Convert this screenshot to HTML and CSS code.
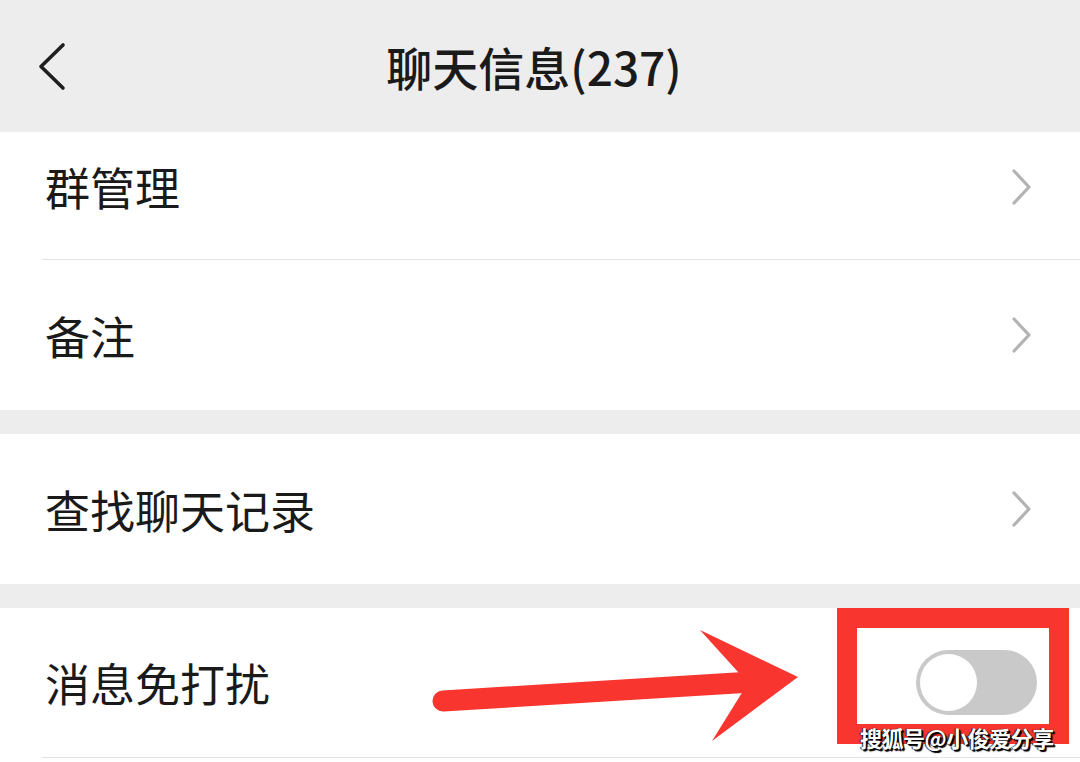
FILE: index.html
```html
<!DOCTYPE html>
<html lang="zh-CN">
<head>
    <meta charset="UTF-8">
    <meta name="viewport" content="width=device-width, initial-scale=1.0">
    <title>聊天信息</title>
    <link rel="stylesheet" href="styles.css">
</head>
<body>

    <div class="page">

        <!-- Top bar -->
        <header class="topbar">
            <div class="back">
                <svg width="30" height="50" viewBox="0 0 30 50">
                    <polyline points="25,3 3,24.5 25,46" fill="none" stroke="#1f1f1f" stroke-width="3.6" stroke-linecap="round" stroke-linejoin="round"/>
                </svg>
            </div>
            <h1 class="title">聊天信息(237)</h1>
            <div></div>
        </header>

        <!-- Group 1 -->
        <section class="group">
            <div class="cell cut">
                <div class="cell-inner line">
                    <span class="label">群管理</span>
                    <svg class="arrow" width="22" height="38" viewBox="0 0 22 38">
                        <polyline points="3,3 18,19 3,35" fill="none" stroke="#b3b3b3" stroke-width="3.2" stroke-linecap="round" stroke-linejoin="round"/>
                    </svg>
                </div>
            </div>
            <div class="cell">
                <div class="cell-inner">
                    <span class="label">备注</span>
                    <svg class="arrow" width="22" height="38" viewBox="0 0 22 38">
                        <polyline points="3,3 18,19 3,35" fill="none" stroke="#b3b3b3" stroke-width="3.2" stroke-linecap="round" stroke-linejoin="round"/>
                    </svg>
                </div>
            </div>
        </section>

        <!-- Group 2 -->
        <section class="group">
            <div class="cell">
                <div class="cell-inner">
                    <span class="label">查找聊天记录</span>
                    <svg class="arrow" width="22" height="38" viewBox="0 0 22 38">
                        <polyline points="3,3 18,19 3,35" fill="none" stroke="#b3b3b3" stroke-width="3.2" stroke-linecap="round" stroke-linejoin="round"/>
                    </svg>
                </div>
            </div>
        </section>

        <!-- Group 3 -->
        <section class="group">
            <div class="cell">
                <div class="cell-inner line toggle-row">
                    <span class="label">消息免打扰</span>
                    <div class="switch">
                        <div class="knob"></div>
                    </div>
                </div>
            </div>
            <!-- next row, scrolled out of view -->
            <div class="cell"></div>
        </section>

        <!-- Annotation drawn on top of the screenshot -->
        <svg class="mark-arrow" width="1080" height="762" viewBox="0 0 1080 762">
            <line x1="443" y1="701" x2="752" y2="682" stroke="#f8352e" stroke-width="21" stroke-linecap="round"/>
            <polygon points="700,630 798,677 712,741 748,683" fill="#f8352e"/>
        </svg>
        <div class="mark-box"></div>
        <div class="watermark">搜狐号@小俊爱分享</div>

    </div>

</body>
</html>
```

FILE: styles.css
```css
* {
    margin: 0;
    padding: 0;
    box-sizing: border-box;
}

body {
    background: #ededed;
    font-family: "Noto Sans CJK SC", "Noto Sans", sans-serif;
    color: #1a1a1a;
}

.page {
    position: relative;
    width: 1080px;
    height: 762px;
    overflow: hidden;
    background: #ededed;
}

/* Top bar */
.topbar {
    height: 132px;
    display: grid;
    grid-template-columns: 1fr auto 1fr;
    align-items: center;
    padding-right: 12px;
    background: #ededed;
}

.back {
    padding-left: 38px;
    padding-top: 2px;
    display: flex;
    align-items: center;
}

.title {
    font-size: 46px;
    font-weight: 500;
    color: #1a1a1a;
}

/* Settings list */
.group {
    background: #fff;
    margin-bottom: 24px;
}

.cell {
    height: 150px;
    padding-left: 42px;
}

/* first row is scrolled partly under the bar */
.cell.cut {
    height: 128px;
}

.cell.cut .cell-inner {
    padding-bottom: 18px;
}

.cell-inner {
    height: 100%;
    display: flex;
    align-items: center;
    justify-content: space-between;
    padding-left: 3px;
    padding-right: 47px;
}

.cell-inner.line {
    border-bottom: 1px solid #e3e3e3;
}

.label {
    font-size: 45px;
    line-height: 1;
    color: #1a1a1a;
}

.arrow {
    display: block;
}

/* Switch (off) */
.toggle-row {
    padding-right: 43px;
}

.switch {
    width: 121px;
    height: 65px;
    border-radius: 33px;
    background: #c9c9c9;
    padding: 4px;
    display: flex;
    align-items: center;
}

.knob {
    width: 57px;
    height: 57px;
    border-radius: 50%;
    background: #fff;
}

/* Red annotation */
.mark-arrow {
    position: absolute;
    left: 0;
    top: 0;
}

.mark-box {
    position: absolute;
    left: 837px;
    top: 608px;
    width: 232px;
    height: 136px;
    border: 20px solid #f8352e;
}

.watermark {
    position: absolute;
    left: 860px;
    top: 722px;
    font-size: 22px;
    font-weight: 700;
    line-height: 30px;
    color: #fff;
    letter-spacing: -0.5px;
    text-shadow: 1px 1px 0 #000, 2px 2px 1px #000, -1px 0 1px #222;
}
```
